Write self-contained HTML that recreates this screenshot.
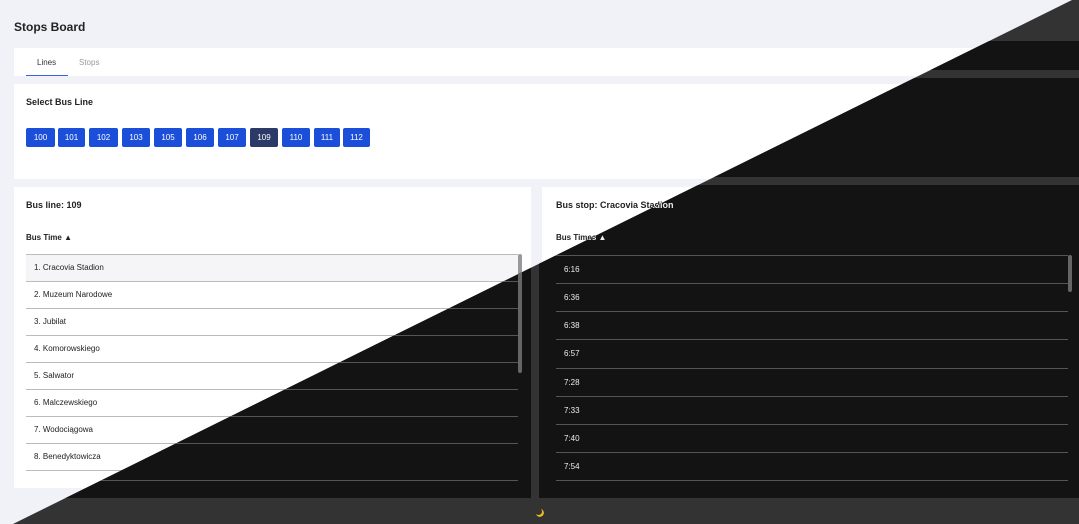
<!DOCTYPE html>
<html><head><meta charset="utf-8"><style>
*{margin:0;padding:0;box-sizing:border-box}
body{width:1079px;height:524px;overflow:hidden;font-family:"Liberation Sans",sans-serif;position:relative}
.layer{position:absolute;left:0;top:0;width:1079px;height:524px}
.light{background:#f1f2f7;color:#222}
.dark{background:#333;color:#eee;clip-path:polygon(1072px 0,1079px 0,1079px 524px,13px 524px)}
.abs{position:absolute}
.t{font-size:8px}
.b{font-weight:bold}
.btn{position:absolute;top:128px;height:19px;background:#1c4fd9;color:#fff;font-size:8px;text-align:center;line-height:19px;border-radius:2px}
.row{position:absolute;height:27px;border-top:1px solid #bbb;font-size:8px;line-height:26px;padding-left:8px}
.drow{position:absolute;height:28px;border-top:1px solid #bbb;font-size:8px;line-height:28px;padding-left:8px}
.dark .row,.dark .drow{border-top-color:#555;color:#eee}
</style></head><body>
<div class="layer light">
 <div class="abs b" style="left:14px;top:20px;font-size:12px">Stops Board</div>
 <div class="abs" style="left:14px;top:48px;width:1065px;height:28px;background:#fff"></div>
 <div class="abs t" style="left:37px;top:58px;color:#333">Lines</div>
 <div class="abs t" style="left:79px;top:58px;color:#999">Stops</div>
 <div class="abs" style="left:26px;top:75px;width:42px;height:1px;background:#3464e0"></div>
 <div class="abs" style="left:14px;top:84px;width:1065px;height:95px;background:#fff"></div>
 <div class="abs b" style="left:26px;top:97px;font-size:9px">Select Bus Line</div>
 <div class="btn" style="left:26px;width:29px">100</div>
 <div class="btn" style="left:58px;width:27px">101</div>
 <div class="btn" style="left:89px;width:29px">102</div>
 <div class="btn" style="left:122px;width:28px">103</div>
 <div class="btn" style="left:154px;width:28px">105</div>
 <div class="btn" style="left:186px;width:28px">106</div>
 <div class="btn" style="left:218px;width:28px">107</div>
 <div class="btn" style="left:250px;width:28px;background:#2b3a66">109</div>
 <div class="btn" style="left:282px;width:28px">110</div>
 <div class="btn" style="left:314px;width:26px">111</div>
 <div class="btn" style="left:343px;width:27px">112</div>
 <div class="abs" style="left:14px;top:187px;width:517px;height:301px;background:#fff"></div>
 <div class="abs" style="left:542px;top:187px;width:537px;height:301px;background:#fff"></div>
 <div class="abs b" style="left:26px;top:200px;font-size:9px">Bus line: 109</div>
 <div class="abs b t" style="left:26px;top:233px">Bus Time &#9650;</div>
 <div class="row" style="left:26px;top:254px;width:492px;background:#f5f5f7">1. Cracovia Stadion</div>
 <div class="row" style="left:26px;top:281px;width:492px">2. Muzeum Narodowe</div>
 <div class="row" style="left:26px;top:308px;width:492px">3. Jubilat</div>
 <div class="row" style="left:26px;top:335px;width:492px">4. Komorowskiego</div>
 <div class="row" style="left:26px;top:362px;width:492px">5. Salwator</div>
 <div class="row" style="left:26px;top:389px;width:492px">6. Malczewskiego</div>
 <div class="row" style="left:26px;top:416px;width:492px">7. Wodociągowa</div>
 <div class="row" style="left:26px;top:443px;width:492px">8. Benedyktowicza</div>
 <div class="abs" style="left:26px;top:470px;width:492px;height:1px;background:#bbb"></div>
 <div class="abs" style="left:518px;top:254px;width:4px;height:119px;background:#999;border-radius:2px"></div>
 <div class="abs b" style="left:556px;top:200px;font-size:9px">Bus stop: Cracovia Stadion</div>
 <div class="abs b t" style="left:556px;top:233px">Bus Times &#9650;</div>
</div>
<div class="layer dark">
 <div class="abs" style="left:0;top:41px;width:1079px;height:29px;background:#131313"></div>
 <div class="abs" style="left:0;top:78px;width:1079px;height:99px;background:#131313"></div>
 <div class="abs" style="left:0;top:185px;width:531px;height:313px;background:#131313"></div>
 <div class="abs" style="left:539px;top:185px;width:540px;height:313px;background:#131313"></div>
 <div class="abs b" style="left:556px;top:200px;font-size:9px">Bus stop: Cracovia Stadion</div>
 <div class="abs b t" style="left:556px;top:233px">Bus Times &#9650;</div>
 <div class="drow" style="left:556px;top:255px;width:512px">6:16</div>
 <div class="drow" style="left:556px;top:283px;width:512px">6:36</div>
 <div class="drow" style="left:556px;top:311px;width:512px">6:38</div>
 <div class="drow" style="left:556px;top:339px;width:512px">6:57</div>
 <div class="drow" style="left:556px;top:368px;width:512px">7:28</div>
 <div class="drow" style="left:556px;top:396px;width:512px">7:33</div>
 <div class="drow" style="left:556px;top:424px;width:512px">7:40</div>
 <div class="drow" style="left:556px;top:452px;width:512px">7:54</div>
 <div class="abs" style="left:556px;top:480px;width:512px;height:1px;background:#555"></div>
 <div class="abs" style="left:1068px;top:255px;width:4px;height:37px;background:#666;border-radius:2px"></div>
 <div class="row" style="left:26px;top:254px;width:492px">1. Cracovia Stadion</div>
 <div class="row" style="left:26px;top:281px;width:492px">2. Muzeum Narodowe</div>
 <div class="row" style="left:26px;top:308px;width:492px">3. Jubilat</div>
 <div class="row" style="left:26px;top:335px;width:492px">4. Komorowskiego</div>
 <div class="row" style="left:26px;top:362px;width:492px">5. Salwator</div>
 <div class="row" style="left:26px;top:389px;width:492px">6. Malczewskiego</div>
 <div class="row" style="left:26px;top:416px;width:492px">7. Wodociągowa</div>
 <div class="row" style="left:26px;top:443px;width:492px">8. Benedyktowicza</div>
 <div class="abs" style="left:26px;top:480px;width:492px;height:1px;background:#555"></div>
 <div class="abs" style="left:518px;top:254px;width:4px;height:119px;background:#666;border-radius:2px"></div>
 <svg class="abs" style="left:535px;top:508px" width="9" height="9" viewBox="0 0 9 9"><path d="M6 1A4 4 0 1 1 1 6A3.2 3.2 0 0 0 6 1Z" fill="#f2c01e"/></svg>
</div>
</body></html>
